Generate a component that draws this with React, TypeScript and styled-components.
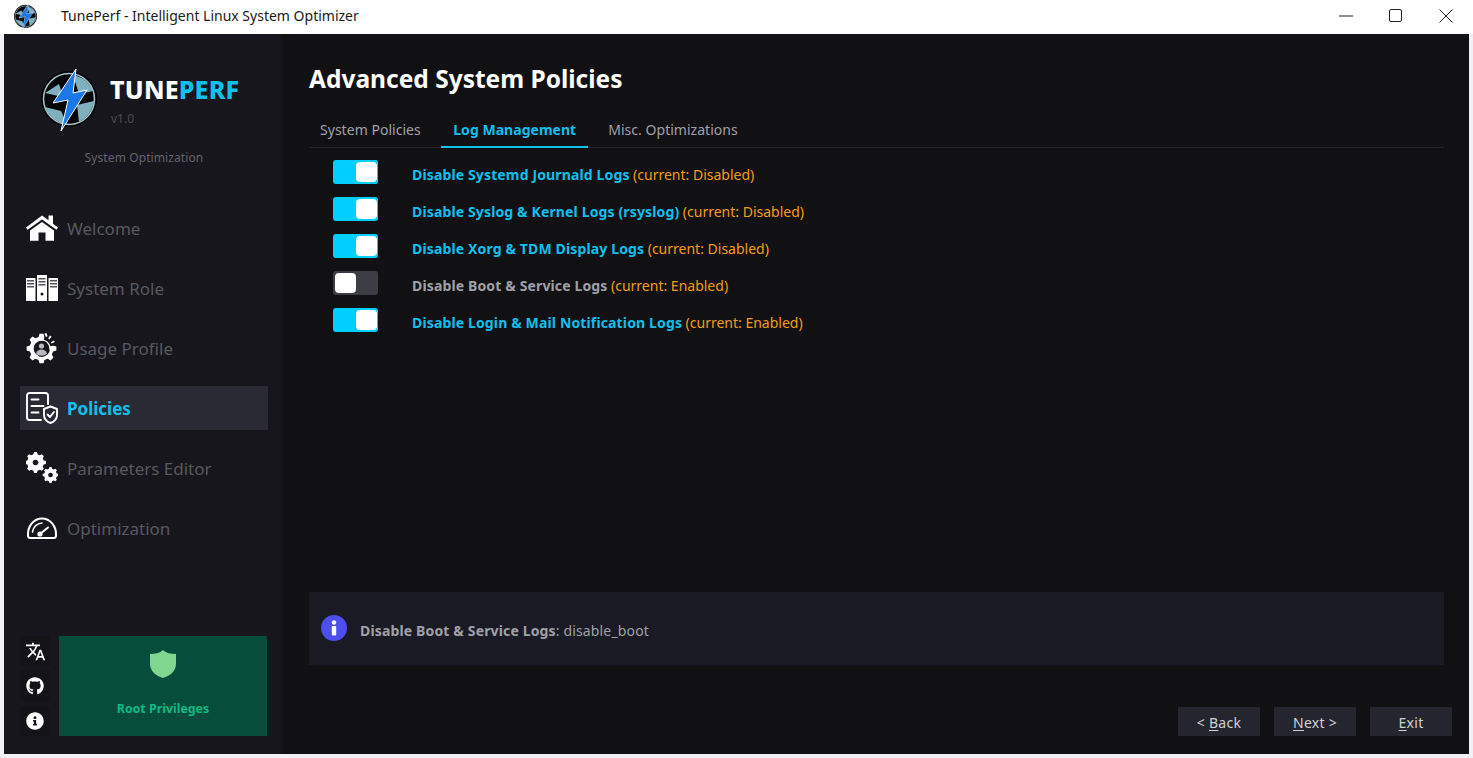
import React from "react";
import styled, { createGlobalStyle } from "styled-components";
import { FaGithub, FaInfoCircle } from "react-icons/fa";
import { MdTranslate } from "react-icons/md";

const Global = createGlobalStyle`
  html, body { margin: 0; padding: 0; background: #f1f1f3; overflow: hidden; }
  * { box-sizing: border-box; }
  #root { width: 1473px; height: 758px; }
`;

const Frame = styled.div`
  width: 1473px; height: 758px; display: flex; flex-direction: column;
  font-family: "Noto Sans", "Open Sans", sans-serif; padding: 0 4px 4px 4px;
`;
const TitleBar = styled.header`
  height: 34px; margin: 0 -4px; background: #fff; display: flex; align-items: center; flex: none;
  padding-left: 14px; color: #1a1a1a; font-size: 14px;
`;
const TitleText = styled.span` margin-left: 24px; margin-top: -4px; `;
const WinControls = styled.div` margin-left: auto; margin-right: 2px; display: flex; align-items: center; margin-top: -3px; `;
const WinBtn = styled.div` width: 50px; height: 30px; display: flex; align-items: center; justify-content: center; `;
const Body = styled.div` flex: 1; display: flex; min-height: 0; `;
const Sidebar = styled.aside`
  width: 280px; flex: none; background: #16161c; display: flex; flex-direction: column;
  padding: 0 16px 18px 16px; box-shadow: inset -4px 0 3px -2px #131317;
`;
const Brand = styled.div` display: flex; align-items: flex-start; padding: 35px 0 0 21px; height: 100px; `;
const BrandText = styled.div` margin-left: 13px; padding-top: 3px; `;
const BrandName = styled.div` font-size: 25px; font-weight: 800; line-height: 34px; color: #fff; letter-spacing: .2px; `;
const Accent = styled.span` color: #0fbfec; `;
const Version = styled.div` font-size: 12px; color: #4d4d55; line-height: 16px; margin-top: 5px; margin-left: 1px; `;
const Tagline = styled.div` font-size: 12px; color: #63636b; text-align: center; line-height: 16px; margin-top: 16px; letter-spacing: .1px; `;
const Nav = styled.nav` display: flex; flex-direction: column; gap: 16px; margin-top: 40px; `;
const NavItem = styled.div<{ $active?: boolean }>`
  height: 44px; display: flex; align-items: center; padding-left: 6px; gap: 9px;
  background: ${p => (p.$active ? "#2a2a35" : "transparent")};
  color: ${p => (p.$active ? "#0fbfec" : "#58585f")};
  font-size: 17px; font-weight: ${p => (p.$active ? 700 : 400)};
`;
const NavIcon = styled.div` width: 32px; height: 32px; color: #fff; flex: none; display: flex; align-items: center; justify-content: center; `;
const Bottom = styled.div` margin-top: auto; display: flex; gap: 9px; height: 100px; `;
const SmallBtns = styled.div` width: 30px; display: flex; flex-direction: column; justify-content: space-between; `;
const SmallBtn = styled.div` height: 30px; background: #131318; color: #fff; display: flex; align-items: center; justify-content: center; `;
const RootCard = styled.div`
  width: 208px; background: #064e3b; display: flex; flex-direction: column; align-items: center;
  color: #10b981; font-size: 12.4px; font-weight: 700; padding-top: 13px;
`;
const RootLabel = styled.div` margin-top: 22px; line-height: 16px; `;
const Main = styled.main` flex: 1; background: #111113; display: flex; flex-direction: column; padding: 0 17px 18px 25px; min-width: 0; `;
const Heading = styled.h1` margin: 28px 0 0 0; font-size: 24.5px; line-height: 34px; color: #fff; font-weight: 700; `;
const Tabs = styled.div` display: flex; margin: 16px 8px 0 0; border-bottom: 1px solid #24242c; height: 36px; `;
const Tab = styled.div<{ $active?: boolean }>`
  padding: 0 12px; margin-right: 8px; height: 36px; line-height: 35px; font-size: 14px; letter-spacing: .03px;
  color: ${p => (p.$active ? "#0fbfec" : "#a0a0a8")}; font-weight: ${p => (p.$active ? 700 : 400)};
  border-bottom: ${p => (p.$active ? "2px solid #0fbfec" : "none")};
  &:first-child { padding-left: 11px; padding-right: 11px; margin-right: 9.5px; }
`;
const Options = styled.div` display: flex; flex-direction: column; gap: 13px; margin-top: 12px; padding-left: 24px; `;
const Option = styled.div` display: flex; align-items: center; height: 24px; font-size: 14px; `;
const Toggle = styled.div<{ $on: boolean }>`
  width: 45px; height: 24px; border-radius: 3px; flex: none; padding: 2px 1px 2px 2px; display: flex;
  justify-content: ${p => (p.$on ? "flex-end" : "flex-start")};
  background: ${p => (p.$on ? "#00cfff" : "#3d3d45")};
`;
const Knob = styled.div` width: 21px; height: 20px; background: #fff; border-radius: 4px; `;
const OptionLabel = styled.div` display: flex; margin: 4px 0 0 34px; `;
const OptionName = styled.span<{ $on: boolean }>` font-weight: 700; letter-spacing: .14px; color: ${p => (p.$on ? "#0fbfec" : "#a0a0a8")}; `;
const Current = styled.span` margin-left: 3.5px; color: #f39c12; `;
const InfoPanel = styled.div`
  margin: auto 8px 0 0; height: 73px; background: #1a1a24; display: flex; align-items: center; padding-left: 12px; font-size: 14px; color: #a0a0a8;
`;
const InfoIcon = styled.div` width: 26px; height: 26px; margin-top: -2px; margin-right: 13px; display: flex; `;
const InfoText = styled.div` margin-top: 4px; letter-spacing: .15px; `;
const Strong = styled.b` font-weight: 700; `;
const Footer = styled.div` display: flex; justify-content: flex-end; gap: 14px; margin: 42px 0 0 0; `;
const FootBtn = styled.div`
  width: 82px; height: 29px; background: #25252f; color: #d0d0d6; font-size: 14px; line-height: 31px; text-align: center; letter-spacing: .25px;
`;
const U = styled.span` text-decoration: underline; text-underline-offset: 2px; `;

const gearPath = (cx: number, cy: number, r: number, teeth: number, inner = 0.74) => {
  const pts: string[] = [];
  const step = (Math.PI * 2) / teeth;
  for (let i = 0; i < teeth; i++) {
    const a = i * step;
    const p = (ang: number, rad: number) =>
      `${(cx + Math.cos(ang) * rad).toFixed(2)} ${(cy + Math.sin(ang) * rad).toFixed(2)}`;
    pts.push(p(a - step * 0.32, r * inner), p(a - step * 0.17, r), p(a + step * 0.17, r), p(a + step * 0.32, r * inner));
  }
  return `M${pts.join("L")}Z`;
};

const Logo = ({ size }: { size: number }) => (
  <svg width={size} height={size * 62 / 56} viewBox="0 0 56 62">
    <circle cx="28" cy="30" r="28" fill="#050507" />
    <circle cx="28" cy="30" r="25.5" fill="none" stroke="#a5c4cc" strokeWidth="1.5" />
    <path d="M4 24 L18 15 L22 28 Z M32 6 C42 8 49 14 52 22 L38 25 Z M53 32 C52 41 46 49 38 53 L36 36 Z M26 55 C16 54 7 47 4 38 L20 42 Z" fill="#7fb0bd" />
    <path d="M35 0 L12 34 L27 31 L20 62 L46 21 L32 24 Z" fill="#1a78e8" stroke="#fff" strokeWidth="1" />
  </svg>
);
const HomeIcon = () => (
  <svg width="32" height="32" viewBox="0 0 32 32" fill="#fff">
    <path d="M16 3.500 L0 15.500 L1.500 17.800 L16 7.500 L30.500 17.800 L32 15.500 L27 11.700 V3.500 H22.500 V8.200 Z" />
    <path d="M16 10 L4 18.500 V28.800 H12.500 V20.500 H19.500 V28.800 H28 V18.500 Z" />
  </svg>
);
const ServerIcon = () => (
  <svg width="32" height="26" viewBox="0 0 32 26" fill="#fff">
    <path d="M0 3h9.500v23H0z M11 0h10v26H11z M22.500 3h9.500v23h-9.500z" />
    <path d="M1 5h7v1.400H1zM1 8h7v1.400H1zM1 11h7v1.400H1zM12.500 3h7v1.400h-7zM12.500 6h7v1.400h-7zM12.500 9h7v1.400h-7zM24 5h7v1.400h-7zM24 8h7v1.400h-7zM24 11h7v1.400h-7z" fill="#55555d" />
    <circle cx="16" cy="19" r="1.500" fill="#16161c" />
  </svg>
);
const ProfileGear = () => (
  <svg width="32" height="32" viewBox="0 0 32 32" fill="#fff">
    <path d={gearPath(15.5, 16.5, 15, 8, 0.8)} />
    <path d="M15.500 16.500 L20 -1 L34 -1 L34 12 Z" fill="#16161c" />
    <circle cx="15.500" cy="16.500" r="8.500" fill="#16161c" />
    <circle cx="15.500" cy="16.500" r="8.500" fill="none" stroke="#fff" strokeWidth="1.300" strokeDasharray="38 16" transform="rotate(110 15.500 16.500)" />
    <circle cx="15.500" cy="14" r="2.600" fill="#b9b9bf" /><path d="M10 21.500c1-3 3-4 5.500-4s4.500 1 5.500 4a8 8 0 0 1-11 0z" fill="#b9b9bf" />
    <path d="M18.500 1.500l2-.6 1 3.400-1.600.6zM24 3.600l1.600 1.200-2.200 2.800-1.300-1zM28 8.500l.8 1.600-3.300 1.400-.6-1.300z" />
  </svg>
);
const PolicyIcon = () => (
  <svg width="32" height="32" viewBox="0 0 32 32" fill="none" stroke="#fff" strokeWidth="1.900" strokeLinecap="round" strokeLinejoin="round">
    <path d="M15 28H3.500A2.500 2.500 0 0 1 1 25.500V3.500A2.500 2.500 0 0 1 3.500 1H19.500A2.500 2.500 0 0 1 22 3.500V12" />
    <path d="M5.500 7.500h7M5.500 14h12M5.500 20.500h7" />
    <path d="M24.500 14.500 31 17V23C31 27 28 29.800 24.500 31 21 29.800 18 27 18 23V17Z" />
    <path d="M21.500 22.500 24 25 28 20" />
  </svg>
);
const CogsIcon = () => (
  <svg width="32" height="32" viewBox="0 0 32 32" fill="#fff">
    <path fillRule="evenodd" d={gearPath(9.5, 10.500, 10.500, 8, 0.8) + "M9.500 7.700a2.800 2.800 0 1 0 .01 0Z"} />
    <path fillRule="evenodd" d={gearPath(24.500, 23, 8, 8, 0.8) + "M24.500 20.700a2.300 2.300 0 1 0 .01 0Z"} />
  </svg>
);
const GaugeIcon = () => (
  <svg width="32" height="22" viewBox="0 0 32 22" fill="none" stroke="#fff" strokeWidth="2" strokeLinecap="round">
    <path d="M2 18.500 C1.500 9 8 1.500 16 1.500 C24 1.500 30.500 9 30 18.500 Q30 21 27.500 21 H4.500 Q2 21 2 18.500Z" />
    <path d="M14 17 L22 10.500" /><circle cx="14" cy="17" r="2.600" fill="#fff" stroke="none" />
    <path d="M6.500 15 C7.500 10 11 6.500 16 6" strokeWidth="1.600" />
  </svg>
);
const Shield = () => (
  <svg width="28" height="30" viewBox="0 0 28 30">
    <path d="M14 1 C17 4 22 5 27 5 V15 C27 22 21 27 14 29 C7 27 1 22 1 15 V5 C6 5 11 4 14 1Z" fill="#7ed68f" />
  </svg>
);
const InfoDot = () => (
  <svg width="26" height="26" viewBox="0 0 26 26">
    <circle cx="13" cy="13" r="13" fill="#4d4df0" />
    <circle cx="13" cy="7.500" r="2.200" fill="#fff" />
    <rect x="10.800" y="11" width="4.400" height="9.500" rx="1" fill="#fff" />
  </svg>
);
const items: [string, React.ReactNode, boolean?][] = [
  ["Welcome", <HomeIcon />],
  ["System Role", <ServerIcon />],
  ["Usage Profile", <ProfileGear />],
  ["Policies", <PolicyIcon />, true],
  ["Parameters Editor", <CogsIcon />],
  ["Optimization", <GaugeIcon />],
];
const options: [string, string, boolean][] = [
  ["Disable Systemd Journald Logs", "Disabled", true],
  ["Disable Syslog & Kernel Logs (rsyslog)", "Disabled", true],
  ["Disable Xorg & TDM Display Logs", "Disabled", true],
  ["Disable Boot & Service Logs", "Enabled", false],
  ["Disable Login & Mail Notification Logs", "Enabled", true],
];

export default function App() {
  return (
    <Frame>
      <Global />
      <TitleBar>
        <Logo size={23} />
        <TitleText>TunePerf - Intelligent Linux System Optimizer</TitleText>
        <WinControls>
          <WinBtn><svg width="14" height="2" viewBox="0 0 14 2"><path d="M0 1h14" stroke="#222" strokeWidth="1" /></svg></WinBtn>
          <WinBtn><svg width="14" height="14" viewBox="0 0 14 14"><rect x=".5" y=".5" width="12" height="12" rx="1.500" fill="none" stroke="#222" /></svg></WinBtn>
          <WinBtn><svg width="14" height="14" viewBox="0 0 14 14"><path d="M.5.5l13 13M13.500.5l-13 13" stroke="#222" /></svg></WinBtn>
        </WinControls>
      </TitleBar>
      <Body>
        <Sidebar>
          <Brand>
            <Logo size={56} />
            <BrandText>
              <BrandName>TUNE<Accent>PERF</Accent></BrandName>
              <Version>v1.0</Version>
            </BrandText>
          </Brand>
          <Tagline>System Optimization</Tagline>
          <Nav>
            {items.map(([label, icon, active]) => (
              <NavItem key={label} $active={active}>
                <NavIcon>{icon}</NavIcon>
                {label}
              </NavItem>
            ))}
          </Nav>
          <Bottom>
            <SmallBtns>
              <SmallBtn><MdTranslate size={21} /></SmallBtn>
              <SmallBtn><FaGithub size={18} /></SmallBtn>
              <SmallBtn><FaInfoCircle size={18} /></SmallBtn>
            </SmallBtns>
            <RootCard>
              <Shield />
              <RootLabel>Root Privileges</RootLabel>
            </RootCard>
          </Bottom>
        </Sidebar>
        <Main>
          <Heading>Advanced System Policies</Heading>
          <Tabs>
            <Tab>System Policies</Tab>
            <Tab $active>Log Management</Tab>
            <Tab>Misc. Optimizations</Tab>
          </Tabs>
          <Options>
            {options.map(([name, cur, on]) => (
              <Option key={name}>
                <Toggle $on={on}><Knob /></Toggle>
                <OptionLabel>
                  <OptionName $on={on}>{name}</OptionName>
                  <Current>(current: {cur})</Current>
                </OptionLabel>
              </Option>
            ))}
          </Options>
          <InfoPanel>
            <InfoIcon><InfoDot /></InfoIcon>
            <InfoText><Strong>Disable Boot &amp; Service Logs</Strong>: disable_boot</InfoText>
          </InfoPanel>
          <Footer>
            <FootBtn>&lt; <U>B</U>ack</FootBtn>
            <FootBtn><U>N</U>ext &gt;</FootBtn>
            <FootBtn><U>E</U>xit</FootBtn>
          </Footer>
        </Main>
      </Body>
    </Frame>
  );
}
